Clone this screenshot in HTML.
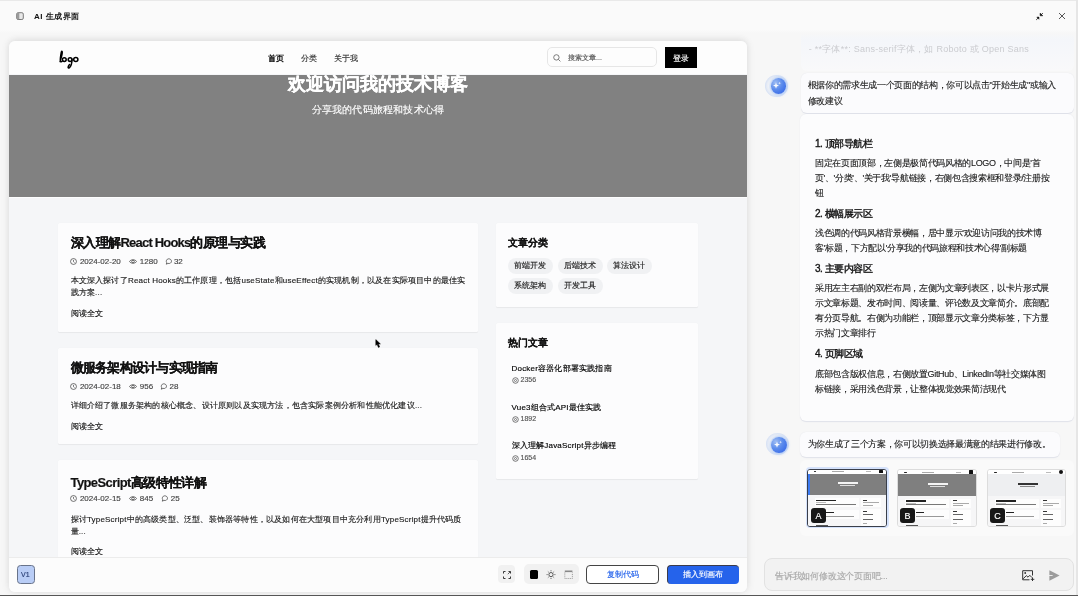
<!DOCTYPE html>
<html><head><meta charset="utf-8">
<style>
*{box-sizing:border-box;margin:0;padding:0}
html,body{width:1078px;height:596px;overflow:hidden;background:#f3f3f3;font-family:"Liberation Sans",sans-serif;color:#111}
#root div{-webkit-text-stroke-width:0.15px}
.a{position:absolute}
.t{position:absolute;white-space:nowrap;line-height:1}
#root{will-change:transform;position:absolute;left:0;top:0;width:1078px;height:596px;background:#f7f7f7;overflow:hidden}
#topbar{left:0;top:0;width:1078px;height:33px;background:linear-gradient(#fafafa 0,#fafafa 29px,#f6f6f6 33px);border-top:1px solid #e9e9e9}
#panel{left:9px;top:41px;width:738px;height:551px;background:#f5f6f8;border-radius:6px;overflow:hidden;box-shadow:0 0 8px rgba(0,0,0,.1),0 -2px 6px rgba(0,0,0,.04)}
#hdr{left:0;top:0;width:738px;height:33px;background:#fdfdfd}
#hero{left:0;top:33.6px;width:738px;height:122.4px;background:#818181}
.card{position:absolute;background:#fcfcfd;border-radius:1.5px;box-shadow:0 0.8px 1px rgba(0,0,0,.06)}
.ttl{position:absolute;white-space:nowrap;font-weight:bold;color:#111}
.meta{position:absolute;white-space:nowrap;font-size:8px;color:#555;line-height:1}
.desc{position:absolute;font-size:8px;letter-spacing:0.2px;color:#222;line-height:12px;-webkit-text-stroke:0.15px #222}
.lt{letter-spacing:-0.8px}
.mrow{position:absolute;display:flex;align-items:center;height:7px;white-space:nowrap;font-size:8px;color:#444}
.mrow svg{display:block;flex:none}
.m1{margin:0 8.3px 0 2.7px;line-height:7px}
.m1v{margin-right:7px}
.m2{margin-left:2.3px;line-height:7px}
.rd{position:absolute;white-space:nowrap;font-size:8px;color:#111;line-height:1}
.tag{position:absolute;height:16px;width:45px;border-radius:8px;background:#f0f1f3;font-size:8px;line-height:16px;text-align:center;color:#222}
#tool{left:0;top:516px;width:738px;height:35px;background:#fcfcfc;border-top:1px solid #ececec}
#chat{left:750px;top:32px;width:328px;height:564px}
.bub{position:absolute;background:#fbfbfd;border-radius:6px;box-shadow:0 0.6px 1px rgba(100,115,160,.16)}
.p{font-size:9px;letter-spacing:-0.33px;color:#1a1a1a;line-height:15px;-webkit-text-stroke:0.12px #1a1a1a !important}
.h{font-size:10px;font-weight:normal;color:#111;line-height:15px;letter-spacing:-0.45px;-webkit-text-stroke:0.35px #111 !important}
.thumb{position:absolute;background:#fff;border:1px solid #dcdcdc;border-radius:3px;overflow:hidden}
.lbl{position:absolute;width:14.8px;height:14.9px;background:#171717;border-radius:3px;color:#fff;font-size:9px;line-height:17px;text-align:center}
</style></head><body>
<div id="root">
  <div id="topbar" class="a"></div>
  <!-- top icon -->
  <svg class="a" style="left:16px;top:12px" width="8" height="8" viewBox="0 0 8 8"><rect x="0.7" y="0.7" width="6.6" height="6.8" rx="1.4" fill="#e9e9e9" stroke="#7a7a7a" stroke-width="1"/><rect x="1" y="1" width="2.3" height="6.2" fill="#9a9a9a"/></svg>
  <div class="t" style="left:34px;top:12.5px;font-size:8px;font-weight:bold;color:#111;letter-spacing:0.5px;-webkit-text-stroke-width:0">AI 生成界面</div>
  <!-- top right icons -->
  <svg class="a" style="left:1035px;top:12px" width="9" height="9" viewBox="0 0 9 9"><path d="M5.1 1.1V3.8H7.8Z" fill="#111" stroke="#111" stroke-width="0.5" stroke-linejoin="round"/><path d="M6 2.9L7.9 1" stroke="#111" stroke-width="0.8"/><path d="M1.8 5.1H4V7.3Z" fill="#111" stroke="#111" stroke-width="0.5" stroke-linejoin="round"/><path d="M3.1 6L1.2 7.9" stroke="#111" stroke-width="0.8"/></svg>
  <svg class="a" style="left:1058px;top:12px" width="8" height="8" viewBox="0 0 8 8"><path d="M1 1 L7 7 M7 1 L1 7" stroke="#444" stroke-width="0.9"/></svg>

  <div id="panel" class="a">
    <div id="hdr" class="a"></div>
    <svg class="a" style="left:41px;top:4px" width="40" height="27" viewBox="0 0 40 27">
      <path d="M10 16.6 C10.9 13.5 12.5 9.5 12.3 7 C12.2 5.9 11.5 6 11.2 7.4 C10.7 10 10.1 13.8 10.3 16.2 C10.5 17.3 11.5 17 12.4 15.8" fill="none" stroke="#000" stroke-width="1.35" stroke-linecap="round"/>
      <ellipse cx="14.3" cy="14.6" rx="1.9" ry="1.9" fill="none" stroke="#000" stroke-width="1.5"/>
      <ellipse cx="20.1" cy="14.6" rx="1.9" ry="1.9" fill="none" stroke="#000" stroke-width="1.5"/>
      <path d="M22 14.3 C22 17.5 21 21.5 19.2 22.8 C17.8 23.6 17.6 21.5 19.5 19.5" fill="none" stroke="#000" stroke-width="1.5" stroke-linecap="round"/>
      <ellipse cx="25.8" cy="14.5" rx="2.1" ry="1.95" fill="none" stroke="#000" stroke-width="1.5"/>
    </svg>
    <div class="t" style="left:259px;top:13.5px;font-size:8px;color:#000;-webkit-text-stroke:0.3px #000">首页</div>
    <div class="t" style="left:292px;top:13.5px;font-size:8px;color:#333">分类</div>
    <div class="t" style="left:325px;top:13.5px;font-size:8px;color:#333">关于我</div>
    <div class="a" style="left:538px;top:6px;width:110px;height:20px;border:1px solid #e6e6e6;border-radius:5px;background:#fdfdfd"></div>
    <svg class="a" style="left:544.4px;top:13.2px" width="8" height="8" viewBox="0 0 8 8"><circle cx="3.4" cy="3.4" r="2.7" fill="none" stroke="#666" stroke-width="0.85"/><path d="M5.4 5.4 L7.4 7.4" stroke="#666" stroke-width="0.85"/></svg>
    <div class="t" style="left:559px;top:12.5px;font-size:7px;color:#555">搜索文章...</div>
    <div class="a" style="left:656px;top:6px;width:32px;height:21px;background:#000"></div>
    <div class="t" style="left:664px;top:13.5px;font-size:8px;color:#fff">登录</div>
    <div id="hero" class="a"></div>
    <div class="a" style="left:0;top:156px;width:738px;height:1px;background:#fdfdfd"></div>
    <div class="t" style="left:0;width:738px;text-align:center;top:33.5px;font-size:18px;font-weight:bold;color:#fff;-webkit-text-stroke:0.3px #fff">欢迎访问我的技术博客</div>
    <div class="t" style="left:0;width:738px;text-align:center;top:64px;font-size:10px;letter-spacing:0.2px;color:#fff">分享我的代码旅程和技术心得</div>

    <div class="card" style="left:49px;top:182px;width:420px;height:109px"></div>
    <div class="card" style="left:49px;top:307px;width:420px;height:96px"></div>
    <div class="card" style="left:49px;top:419px;width:420px;height:120px"></div>
    <div class="card" style="left:487px;top:182px;width:202px;height:84px"></div>
    <div class="card" style="left:487px;top:282px;width:202px;height:156px"></div>

    <div class="ttl" style="left:61.5px;top:195px;font-size:13px;line-height:14px;letter-spacing:-0.5px">深入理解<span class="lt">React Hooks</span>的原理与实践</div>
        <div class="mrow" style="left:61.2px;top:216.60000000000002px"><svg width="7" height="7" viewBox="0 0 7 7"><circle cx="3.5" cy="3.5" r="2.95" fill="none" stroke="#444" stroke-width="0.75"/><path d="M3.5 1.9V3.7L4.5 4.5" fill="none" stroke="#444" stroke-width="0.7"/></svg><span class="m1">2024-02-20</span><svg width="8" height="7" viewBox="0 0 8 7"><path d="M0.5 3.5C1.6 1.2 6.4 1.2 7.5 3.5C6.4 5.8 1.6 5.8 0.5 3.5Z" fill="none" stroke="#444" stroke-width="0.75"/><circle cx="4" cy="3.5" r="1.3" fill="none" stroke="#444" stroke-width="0.75"/></svg><span class="m1 m1v">1280</span><svg width="7" height="7" viewBox="0 0 7 7"><path d="M1.3 6.2L1.7 4.7C0.7 3.2 1.6 0.8 3.7 0.8C5.4 0.8 6.5 2 6.5 3.2C6.5 4.8 4.8 5.9 3 5.4Z" fill="none" stroke="#444" stroke-width="0.75"/></svg><span class="m2">32</span></div>
    <div class="desc" style="left:61.5px;top:234px;width:400px;white-space:nowrap">本文深入探讨了React Hooks的工作原理，包括useState和useEffect的实现机制，以及在实际项目中的最佳实<br>践方案...</div>
    <div class="rd" style="left:61.5px;top:268.5px">阅读全文</div>

    <div class="ttl" style="left:61.5px;top:320px;font-size:13px;line-height:14px;letter-spacing:-0.75px">微服务架构设计与实现指南</div>
        <div class="mrow" style="left:61.2px;top:341.8px"><svg width="7" height="7" viewBox="0 0 7 7"><circle cx="3.5" cy="3.5" r="2.95" fill="none" stroke="#444" stroke-width="0.75"/><path d="M3.5 1.9V3.7L4.5 4.5" fill="none" stroke="#444" stroke-width="0.7"/></svg><span class="m1">2024-02-18</span><svg width="8" height="7" viewBox="0 0 8 7"><path d="M0.5 3.5C1.6 1.2 6.4 1.2 7.5 3.5C6.4 5.8 1.6 5.8 0.5 3.5Z" fill="none" stroke="#444" stroke-width="0.75"/><circle cx="4" cy="3.5" r="1.3" fill="none" stroke="#444" stroke-width="0.75"/></svg><span class="m1 m1v">956</span><svg width="7" height="7" viewBox="0 0 7 7"><path d="M1.3 6.2L1.7 4.7C0.7 3.2 1.6 0.8 3.7 0.8C5.4 0.8 6.5 2 6.5 3.2C6.5 4.8 4.8 5.9 3 5.4Z" fill="none" stroke="#444" stroke-width="0.75"/></svg><span class="m2">28</span></div>
    <div class="desc" style="left:61.5px;top:358.5px;width:400px;white-space:nowrap">详细介绍了微服务架构的核心概念、设计原则以及实现方法，包含实际案例分析和性能优化建议...</div>
    <div class="rd" style="left:61.5px;top:381.5px">阅读全文</div>

    <div class="ttl" style="left:61.5px;top:435px;font-size:13px;line-height:14px;letter-spacing:-0.4px"><span class="lt" style="letter-spacing:-0.6px">TypeScript</span>高级特性详解</div>
        <div class="mrow" style="left:61.2px;top:454.3px"><svg width="7" height="7" viewBox="0 0 7 7"><circle cx="3.5" cy="3.5" r="2.95" fill="none" stroke="#444" stroke-width="0.75"/><path d="M3.5 1.9V3.7L4.5 4.5" fill="none" stroke="#444" stroke-width="0.7"/></svg><span class="m1">2024-02-15</span><svg width="8" height="7" viewBox="0 0 8 7"><path d="M0.5 3.5C1.6 1.2 6.4 1.2 7.5 3.5C6.4 5.8 1.6 5.8 0.5 3.5Z" fill="none" stroke="#444" stroke-width="0.75"/><circle cx="4" cy="3.5" r="1.3" fill="none" stroke="#444" stroke-width="0.75"/></svg><span class="m1">845</span><svg width="7" height="7" viewBox="0 0 7 7"><path d="M1.3 6.2L1.7 4.7C0.7 3.2 1.6 0.8 3.7 0.8C5.4 0.8 6.5 2 6.5 3.2C6.5 4.8 4.8 5.9 3 5.4Z" fill="none" stroke="#444" stroke-width="0.75"/></svg><span class="m2">25</span></div>
    <div class="desc" style="left:61.5px;top:473px;width:400px;white-space:nowrap">探讨TypeScript中的高级类型、泛型、装饰器等特性，以及如何在大型项目中充分利用TypeScript提升代码质<br>量...</div>
    <div class="rd" style="left:61.5px;top:506.5px">阅读全文</div>

    <div class="ttl" style="left:498.5px;top:197px;font-size:10px;line-height:10px">文章分类</div>
    <div class="tag" style="left:498.5px;top:216.5px">前端开发</div>
    <div class="tag" style="left:548.5px;top:216.5px">后端技术</div>
    <div class="tag" style="left:597.5px;top:216.5px">算法设计</div>
    <div class="tag" style="left:498.5px;top:237px">系统架构</div>
    <div class="tag" style="left:548.5px;top:237px">开发工具</div>

    <div class="ttl" style="left:498.5px;top:297px;font-size:10px;line-height:10px">热门文章</div>
    <div class="rd" style="left:502.5px;top:323.5px;color:#000;letter-spacing:0.2px">Docker容器化部署实践指南</div>
    <div class="a" style="left:502.5px;top:335.5px;width:60px;height:7px"><svg width="7" height="7" viewBox="0 0 7 7" style="position:absolute;left:0;top:0"><circle cx="3.5" cy="3.5" r="2.8" fill="none" stroke="#555" stroke-width="0.8"/><circle cx="3.5" cy="3.5" r="1" fill="none" stroke="#555" stroke-width="0.7"/></svg><div class="meta" style="left:9px;top:-0.5px;font-size:7px">2356</div></div>
    <div class="rd" style="left:502.5px;top:362.5px;color:#000;letter-spacing:0.2px">Vue3组合式API最佳实践</div>
    <div class="a" style="left:502.5px;top:374.5px;width:60px;height:7px"><svg width="7" height="7" viewBox="0 0 7 7" style="position:absolute;left:0;top:0"><circle cx="3.5" cy="3.5" r="2.8" fill="none" stroke="#555" stroke-width="0.8"/><circle cx="3.5" cy="3.5" r="1" fill="none" stroke="#555" stroke-width="0.7"/></svg><div class="meta" style="left:9px;top:-0.5px;font-size:7px">1892</div></div>
    <div class="rd" style="left:502.5px;top:401px;color:#000;letter-spacing:0.2px">深入理解JavaScript异步编程</div>
    <div class="a" style="left:502.5px;top:413.5px;width:60px;height:7px"><svg width="7" height="7" viewBox="0 0 7 7" style="position:absolute;left:0;top:0"><circle cx="3.5" cy="3.5" r="2.8" fill="none" stroke="#555" stroke-width="0.8"/><circle cx="3.5" cy="3.5" r="1" fill="none" stroke="#555" stroke-width="0.7"/></svg><div class="meta" style="left:9px;top:-0.5px;font-size:7px">1654</div></div>

    <div id="tool" class="a"></div>
    <div class="a" style="left:7.7px;top:524px;width:18.3px;height:18.5px;background:#b9cdf6;border:1px solid #68738a;border-radius:3.5px"></div>
    <div class="t" style="left:12px;top:529.5px;font-size:7px;color:#2a3f75">V1</div>
    <div class="a" style="left:489px;top:524.2px;width:17.1px;height:18.1px;background:#f1f1f1;border-radius:4px"></div>
    <svg class="a" style="left:494px;top:529.5px" width="8" height="8" viewBox="0 0 8 8"><path d="M0.5 2.5V0.5H2.5 M5.5 0.5H7.5V2.5 M7.5 5.5V7.5H5.5 M2.5 7.5H0.5V5.5" fill="none" stroke="#222" stroke-width="0.9"/><path d="M4.8 3.2L7.2 0.8" stroke="#222" stroke-width="0.7"/></svg>
    <div class="a" style="left:515.2px;top:523.4px;width:54.4px;height:20.1px;background:#f1f1f1;border-radius:5px"></div>
    <div class="a" style="left:520.9px;top:528.9px;width:8.3px;height:9.1px;background:#000;border-radius:1.5px"></div>
    <svg class="a" style="left:537.3px;top:528.9px" width="10" height="9" viewBox="0 0 10 9"><circle cx="5" cy="4.6" r="2.1" fill="none" stroke="#333" stroke-width="0.8"/><path d="M5 0.3V1.3 M5 7.9V8.9 M0.6 4.6H1.6 M8.4 4.6H9.4 M1.9 1.5L2.6 2.2 M7.4 7L8.1 7.7 M8.1 1.5L7.4 2.2 M2.6 7L1.9 7.7" stroke="#333" stroke-width="0.8"/></svg>
    <svg class="a" style="left:555.4px;top:528.9px" width="9" height="9" viewBox="0 0 9 9"><rect x="0.8" y="0.5" width="7.6" height="1.6" fill="#888"/><path d="M0.8 2.5V8.5H8.4V2.5" fill="none" stroke="#777" stroke-width="0.7" stroke-dasharray="1 0.9"/></svg>
    <div class="a" style="left:577.3px;top:524.3px;width:72.6px;height:18.6px;background:#fff;border:1px solid #444;border-radius:4px"></div>
    <div class="t" style="left:577.3px;width:72.6px;text-align:center;top:530px;font-size:8px;color:#2563eb">复制代码</div>
    <div class="a" style="left:658.2px;top:524.3px;width:71.8px;height:18.6px;background:#2563eb;border-radius:4px;border-top:1px solid #3b3b4a;border-left:1px solid #3b3b4a"></div>
    <div class="t" style="left:658.2px;width:71.8px;text-align:center;top:530px;font-size:8px;color:#fff">插入到画布</div>
  </div>


  <div class="a" style="left:800.5px;top:33px;width:273px;height:38px;background:linear-gradient(rgba(247,247,247,1) 0%,rgba(244,246,250,1) 20%,rgba(249,249,250,1) 100%);border-radius:0 0 6px 6px"></div>
  <div class="t" style="left:808.7px;top:45px;font-size:9px;letter-spacing:0.25px;color:#cbccd0;-webkit-text-stroke-width:0">- **字体**: Sans-serif字体，如 Roboto 或 Open Sans</div>
    <div class="a" style="left:765.3px;top:74.8px;width:23px;height:22px;border-radius:50%;background:radial-gradient(circle,rgba(120,160,240,.0) 50%,rgba(170,195,240,.45) 72%,rgba(210,222,245,.0) 100%)"></div>
  <div class="a" style="left:770.5999999999999px;top:77.6px;width:15.5px;height:16px;border-radius:50%;background:radial-gradient(circle at 30% 30%,#9dbcf3 0%,#5a8aec 45%,#2a5de6 100%);box-shadow:0 0 3px 1px rgba(110,160,245,.55);filter:blur(0.4px)"></div>
  <svg class="a" style="left:772.3px;top:80.6px" width="10" height="9" viewBox="0 0 10 9"><path d="M4 1.5 L4.8 3.8 L7 4.6 L4.8 5.4 L4 7.7 L3.2 5.4 L1 4.6 L3.2 3.8Z" fill="#fff" opacity=".95"/><path d="M7.6 0.8 L8 1.8 L9 2.2 L8 2.6 L7.6 3.6 L7.2 2.6 L6.2 2.2 L7.2 1.8Z" fill="#fff" opacity=".8"/></svg>
  <div class="bub" style="left:800.6px;top:72.9px;width:273px;height:39.9px"></div>
  <div class="a p" style="left:807.5px;top:78px;line-height:15.5px;white-space:nowrap">根据你的需求生成一个页面的结构，你可以点击"开始生成"或输入<br>修改建议</div>
  <div class="bub" style="left:800.4px;top:114.2px;width:273.2px;height:307.3px;background:#fcfcfd"></div>
  <div class="t h" style="left:814.9px;top:136.2px">1. 顶部导航栏</div>
  <div class="a p" style="left:814.9px;top:156.4px;white-space:nowrap">固定在页面顶部，左侧是极简代码风格的LOGO，中间是'首<br>页'、'分类'、'关于我'导航链接，右侧包含搜索框和登录/注册按<br>钮</div>
  <div class="t h" style="left:814.9px;top:206.2px">2. 横幅展示区</div>
  <div class="a p" style="left:814.9px;top:226.3px;white-space:nowrap">浅色调的代码风格背景横幅，居中显示'欢迎访问我的技术博<br>客'标题，下方配以'分享我的代码旅程和技术心得'副标题</div>
  <div class="t h" style="left:814.9px;top:260.7px">3. 主要内容区</div>
  <div class="a p" style="left:814.9px;top:280.9px;white-space:nowrap">采用左主右副的双栏布局，左侧为文章列表区，以卡片形式展<br>示文章标题、发布时间、阅读量、评论数及文章简介。底部配<br>有分页导航。右侧为功能栏，顶部显示文章分类标签，下方显<br>示热门文章排行</div>
  <div class="t h" style="left:814.9px;top:346.1px">4. 页脚区域</div>
  <div class="a p" style="left:814.9px;top:366.9px;white-space:nowrap">底部包含版权信息，右侧放置GitHub、LinkedIn等社交媒体图<br>标链接，采用浅色背景，让整体视觉效果简洁现代</div>

  <div class="a" style="left:765.5px;top:433.1px;width:23px;height:22px;border-radius:50%;background:radial-gradient(circle,rgba(120,160,240,.0) 50%,rgba(170,195,240,.45) 72%,rgba(210,222,245,.0) 100%)"></div>
  <div class="a" style="left:771.2px;top:437px;width:15.5px;height:16px;border-radius:50%;background:radial-gradient(circle at 30% 30%,#9dbcf3 0%,#5a8aec 45%,#2a5de6 100%);box-shadow:0 0 3px 1px rgba(110,160,245,.55);filter:blur(0.4px)"></div>
  <svg class="a" style="left:772.9px;top:440px" width="10" height="9" viewBox="0 0 10 9"><path d="M4 1.5 L4.8 3.8 L7 4.6 L4.8 5.4 L4 7.7 L3.2 5.4 L1 4.6 L3.2 3.8Z" fill="#fff" opacity=".95"/><path d="M7.6 0.8 L8 1.8 L9 2.2 L8 2.6 L7.6 3.6 L7.2 2.6 L6.2 2.2 L7.2 1.8Z" fill="#fff" opacity=".8"/></svg>
  <div class="bub" style="left:800.3px;top:432px;width:259.6px;height:25.2px"></div>
  <div class="t p" style="left:807.7px;top:437px;line-height:15px">为你生成了三个方案，你可以切换选择最满意的结果进行修改。</div>
  <div class="a" style="left:800.3px;top:460px;width:273.5px;height:76px;background:#fafafa;border-radius:6px"></div>
  <div class="a" style="left:805.6px;top:467.2px;width:83.4px;height:61px;border-radius:4px;background:#d5e2fb"></div>
  <div class="thumb" style="left:807.3px;top:468.6px;width:80.1px;height:58.4px;border:1px solid #3a3f4a"><div class="a" style="left:0;top:0;width:100%;height:4.2px;background:#fff"></div><div class="a" style="left:5.5px;top:1.6px;width:2.2px;height:1.3px;background:#222;border-radius:1px"></div><div class="a" style="left:24px;top:1.9px;width:12px;height:0.8px;background:#aaa"></div><div class="a" style="left:58px;top:1.9px;width:5px;height:0.8px;background:#bbb"></div><div class="a" style="left:70.5px;top:0.4px;width:3.8px;height:3.4px;background:#111;border-radius:0.6px"></div><div class="a" style="left:0;top:4.2px;width:100%;height:21.5px;background:#7f7f7f"></div><div class="a" style="left:0;top:4.2px;width:2px;height:21.5px;background:#3d7bf0"></div><div class="a" style="left:29.5px;top:12.6px;width:20px;height:2px;background:#f4f4f4"></div><div class="a" style="left:32px;top:15.7px;width:15px;height:1px;background:#ddd"></div><div class="a" style="left:0;top:25.7px;width:100%;height:40px;background:#f6f6f7"></div><div class="a" style="left:6.5px;top:28.5px;width:44px;height:9px;background:#fdfdfd"></div><div class="a" style="left:8px;top:30.3px;width:20px;height:1.2px;background:#222"></div><div class="a" style="left:8px;top:32.6px;width:10px;height:0.6px;background:#bbb"></div><div class="a" style="left:8px;top:34.2px;width:40px;height:0.7px;background:#777"></div><div class="a" style="left:6.5px;top:40px;width:44px;height:9px;background:#fdfdfd"></div><div class="a" style="left:18px;top:42px;width:8px;height:1.2px;background:#222"></div><div class="a" style="left:18px;top:46px;width:28px;height:0.7px;background:#999"></div><div class="a" style="left:8px;top:55px;width:12px;height:0.8px;background:#555"></div><div class="a" style="left:53px;top:28.5px;width:20px;height:9px;background:#fdfdfd"></div><div class="a" style="left:54.5px;top:30px;width:4px;height:1.2px;background:#333"></div><div class="a" style="left:54.5px;top:32.8px;width:16px;height:0.7px;background:#aaa"></div><div class="a" style="left:54.5px;top:35px;width:10px;height:0.7px;background:#aaa"></div><div class="a" style="left:53px;top:39.5px;width:20px;height:17px;background:#fdfdfd"></div><div class="a" style="left:54.5px;top:41px;width:4px;height:1.2px;background:#333"></div><div class="a" style="left:54.5px;top:44px;width:10px;height:0.7px;background:#666"></div><div class="a" style="left:54.5px;top:49px;width:10px;height:0.7px;background:#666"></div><div class="a" style="left:54.5px;top:53px;width:4px;height:0.7px;background:#aaa"></div></div>
  <div class="thumb" style="left:897.3px;top:469.1px;width:79.3px;height:57.5px;"><div class="a" style="left:0;top:0;width:100%;height:4.2px;background:#fff"></div><div class="a" style="left:5.5px;top:1.6px;width:3px;height:1.3px;background:#222;border-radius:1px"></div><div class="a" style="left:24px;top:1.9px;width:12px;height:0.8px;background:#aaa"></div><div class="a" style="left:58px;top:1.9px;width:5px;height:0.8px;background:#bbb"></div><div class="a" style="left:70.5px;top:0.4px;width:3.8px;height:3.4px;background:#111;border-radius:0.6px"></div><div class="a" style="left:0;top:4.2px;width:100%;height:21.5px;background:#7f7f7f"></div><div class="a" style="left:29.5px;top:12.6px;width:20px;height:2px;background:#f4f4f4"></div><div class="a" style="left:32px;top:15.7px;width:15px;height:1px;background:#ddd"></div><div class="a" style="left:0;top:25.7px;width:100%;height:40px;background:#f6f6f7"></div><div class="a" style="left:6.5px;top:28.5px;width:44px;height:9px;background:#fdfdfd"></div><div class="a" style="left:8px;top:30.3px;width:20px;height:1.2px;background:#222"></div><div class="a" style="left:8px;top:32.6px;width:10px;height:0.6px;background:#bbb"></div><div class="a" style="left:8px;top:34.2px;width:40px;height:0.7px;background:#777"></div><div class="a" style="left:6.5px;top:40px;width:44px;height:9px;background:#fdfdfd"></div><div class="a" style="left:18px;top:42px;width:8px;height:1.2px;background:#222"></div><div class="a" style="left:18px;top:46px;width:28px;height:0.7px;background:#999"></div><div class="a" style="left:8px;top:55px;width:12px;height:0.8px;background:#555"></div><div class="a" style="left:53px;top:28.5px;width:20px;height:9px;background:#fdfdfd"></div><div class="a" style="left:54.5px;top:30px;width:4px;height:1.2px;background:#333"></div><div class="a" style="left:54.5px;top:32.8px;width:16px;height:0.7px;background:#aaa"></div><div class="a" style="left:54.5px;top:35px;width:10px;height:0.7px;background:#aaa"></div><div class="a" style="left:53px;top:39.5px;width:20px;height:17px;background:#fdfdfd"></div><div class="a" style="left:54.5px;top:41px;width:4px;height:1.2px;background:#333"></div><div class="a" style="left:54.5px;top:44px;width:10px;height:0.7px;background:#666"></div><div class="a" style="left:54.5px;top:49px;width:10px;height:0.7px;background:#666"></div><div class="a" style="left:54.5px;top:53px;width:4px;height:0.7px;background:#aaa"></div></div>
  <div class="thumb" style="left:987.3px;top:469.1px;width:78.7px;height:57.5px;"><div class="a" style="left:0;top:0;width:100%;height:4.2px;background:#fff"></div><div class="a" style="left:5.5px;top:1.6px;width:3px;height:1.3px;background:#222;border-radius:1px"></div><div class="a" style="left:24px;top:1.9px;width:12px;height:0.8px;background:#aaa"></div><div class="a" style="left:58px;top:1.9px;width:5px;height:0.8px;background:#bbb"></div><div class="a" style="left:70.5px;top:0.4px;width:3.8px;height:3.4px;background:#111;border-radius:2px"></div><div class="a" style="left:0;top:4.2px;width:100%;height:21.5px;background:#eeeff1"></div><div class="a" style="left:29.5px;top:12.6px;width:20px;height:2px;background:#333"></div><div class="a" style="left:32px;top:15.7px;width:15px;height:1px;background:#888"></div><div class="a" style="left:0;top:25.7px;width:100%;height:40px;background:#f6f6f7"></div><div class="a" style="left:6.5px;top:28.5px;width:44px;height:9px;background:#fdfdfd"></div><div class="a" style="left:8px;top:30.3px;width:20px;height:1.2px;background:#222"></div><div class="a" style="left:8px;top:32.6px;width:10px;height:0.6px;background:#bbb"></div><div class="a" style="left:8px;top:34.2px;width:40px;height:0.7px;background:#777"></div><div class="a" style="left:6.5px;top:40px;width:44px;height:9px;background:#fdfdfd"></div><div class="a" style="left:18px;top:42px;width:8px;height:1.2px;background:#222"></div><div class="a" style="left:18px;top:46px;width:28px;height:0.7px;background:#999"></div><div class="a" style="left:8px;top:55px;width:12px;height:0.8px;background:#555"></div><div class="a" style="left:53px;top:28.5px;width:20px;height:9px;background:#fdfdfd"></div><div class="a" style="left:54.5px;top:30px;width:4px;height:1.2px;background:#333"></div><div class="a" style="left:54.5px;top:32.8px;width:16px;height:0.7px;background:#aaa"></div><div class="a" style="left:54.5px;top:35px;width:10px;height:0.7px;background:#aaa"></div><div class="a" style="left:53px;top:39.5px;width:20px;height:17px;background:#fdfdfd"></div><div class="a" style="left:54.5px;top:41px;width:4px;height:1.2px;background:#333"></div><div class="a" style="left:54.5px;top:44px;width:10px;height:0.7px;background:#666"></div><div class="a" style="left:54.5px;top:49px;width:10px;height:0.7px;background:#666"></div><div class="a" style="left:54.5px;top:53px;width:4px;height:0.7px;background:#aaa"></div></div>
  <div class="lbl" style="left:811px;top:508.1px">A</div>
  <div class="lbl" style="left:900px;top:508px">B</div>
  <div class="lbl" style="left:990px;top:508.3px">C</div>

  <div class="a" style="left:764.2px;top:558.2px;width:309.5px;height:32.9px;background:#f2f2f2;border:1px solid #e2e2e2;border-radius:8px"></div>
  <div class="t" style="left:775px;top:571.5px;font-size:9px;letter-spacing:-0.2px;color:#a8a8a8">告诉我如何修改这个页面吧...</div>
  <svg class="a" style="left:1022px;top:570px" width="13" height="11" viewBox="0 0 13 11"><path d="M10.5 5.5V0.7H0.7V9.8H7.5" fill="none" stroke="#333" stroke-width="1"/><path d="M1.2 8.8L4.3 5.6L6 7.2L7.8 5.3L10 7.6" fill="none" stroke="#333" stroke-width="1"/><circle cx="3.2" cy="3" r="0.9" fill="#333"/><path d="M10.5 7.5V11 M8.8 9.3H12.3" stroke="#333" stroke-width="1"/></svg>
  <svg class="a" style="left:1048.5px;top:570px" width="11" height="11" viewBox="0 0 11 11"><path d="M0.4 0.3L10.6 5.5L0.4 10.7Z" fill="#9b9b9b"/><path d="M0 5.5H3.6" stroke="#f2f2f2" stroke-width="0.9"/></svg>
  <svg class="a" style="left:375.3px;top:339.2px" width="7" height="10" viewBox="0 0 7 10"><path d="M0.8 0.6V6.4L2.1 5.2L3.4 8.4L4.6 7.9L3.4 4.9H5.4Z" fill="#fff" stroke="#fff" stroke-width="1.3" stroke-linejoin="round"/><path d="M0.8 0.6V6.4L2.1 5.2L3.4 8.4L4.6 7.9L3.4 4.9H5.4Z" fill="#000" stroke="#000" stroke-width="0.55" stroke-linejoin="round"/></svg>
  <div class="a" style="left:1076.3px;top:0;width:1.7px;height:596px;background:#e6e6e6"></div>
  <div class="a" style="left:0;top:594.5px;width:1078px;height:1.5px;background:#565656"></div>
</div>
</body></html>
